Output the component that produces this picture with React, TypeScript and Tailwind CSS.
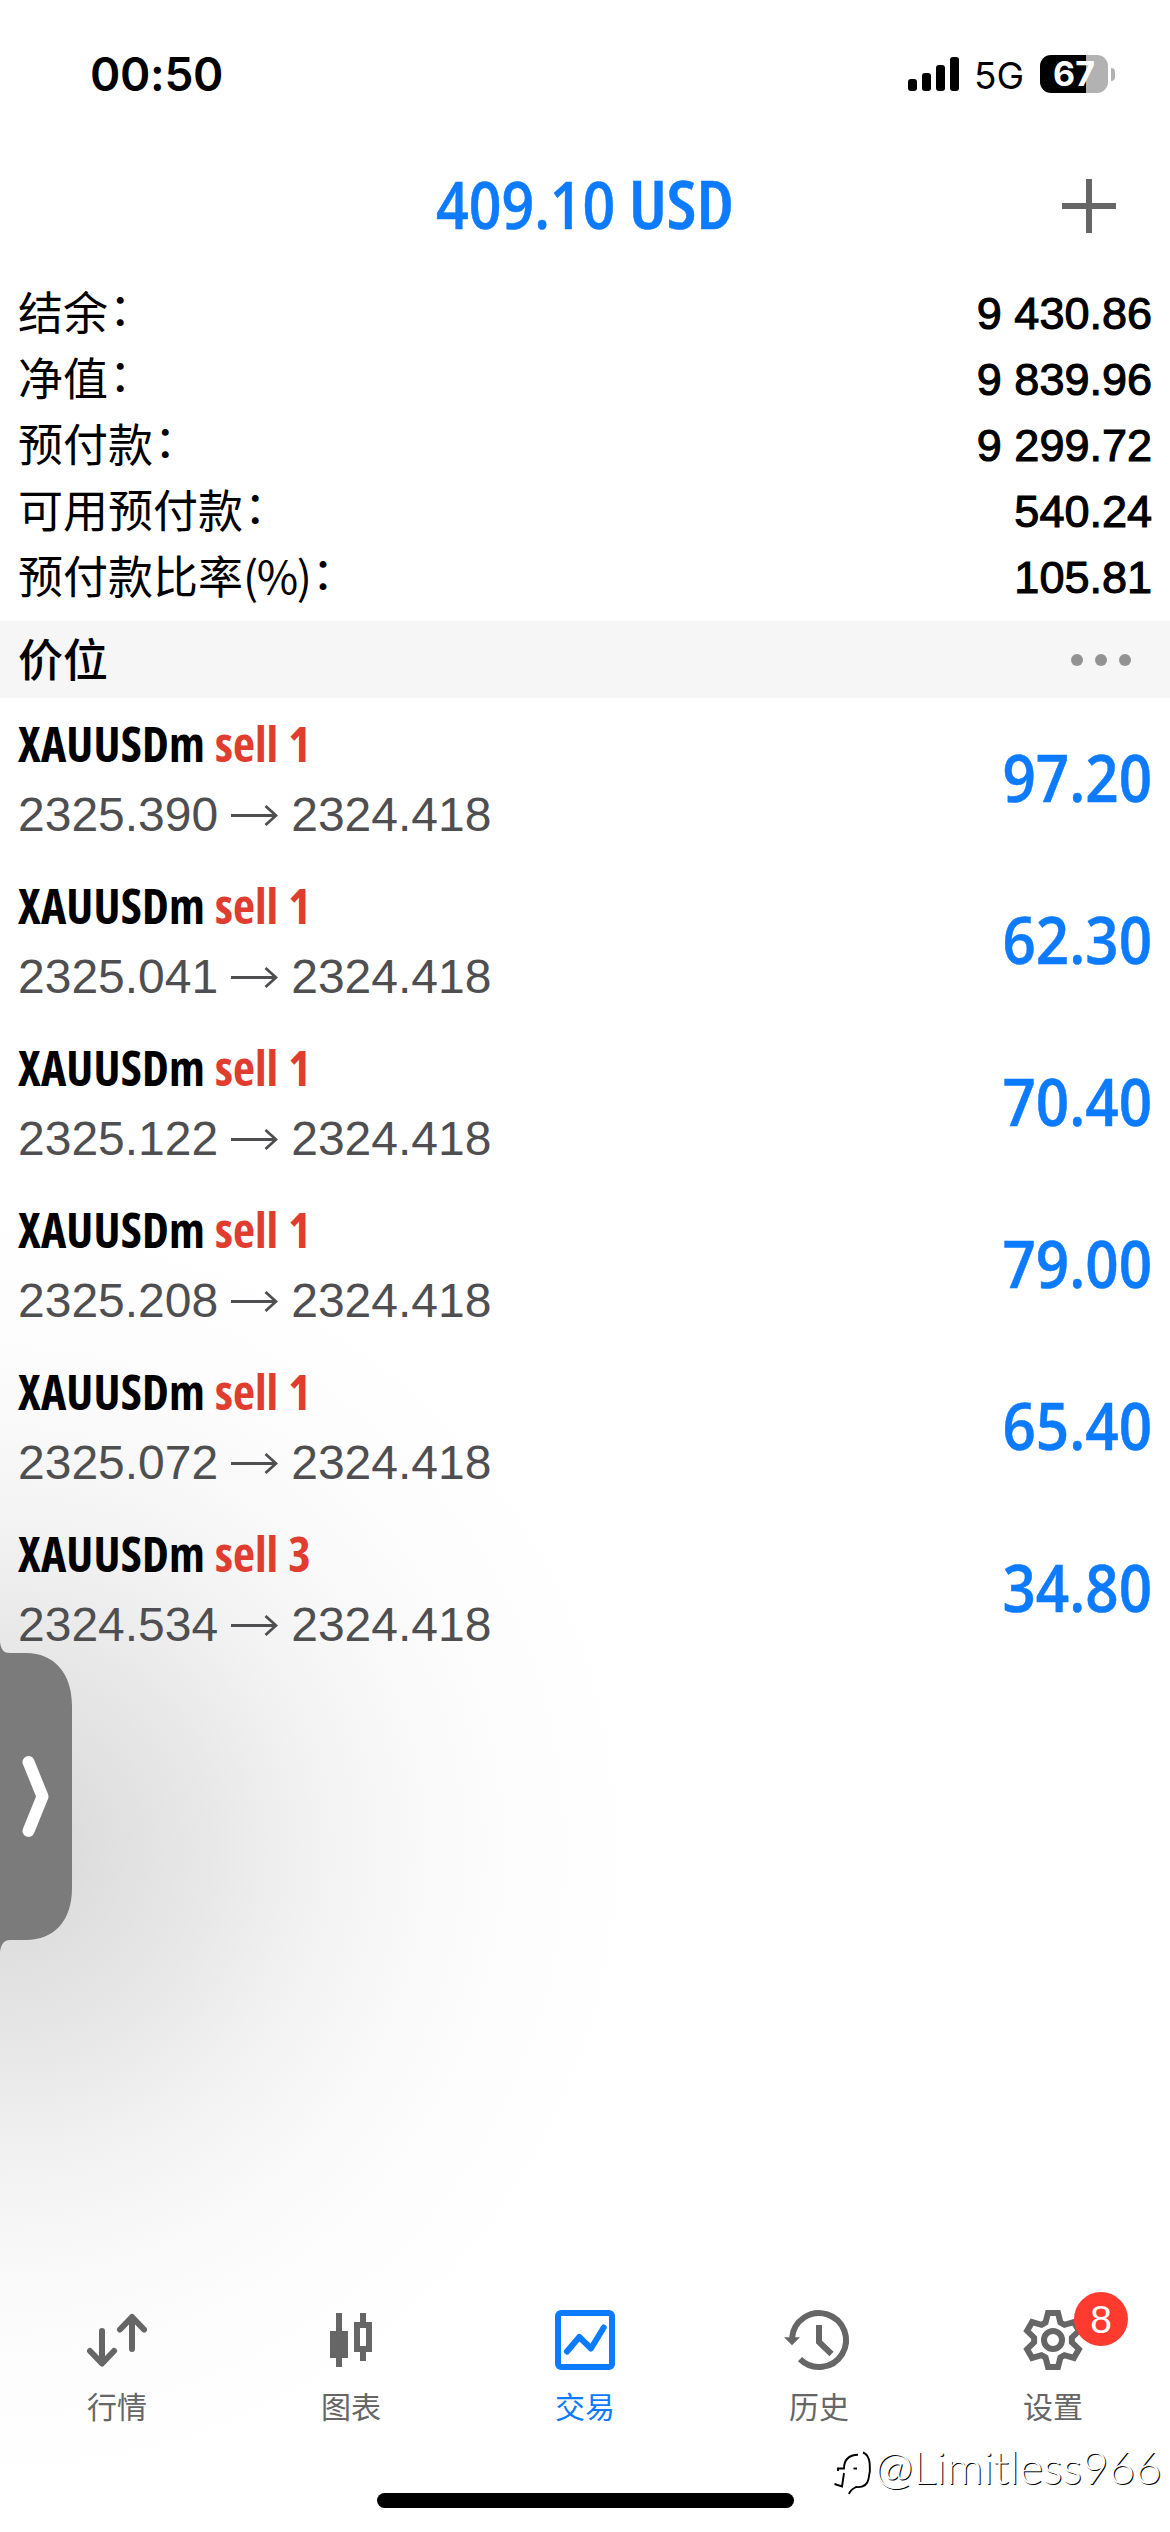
const SUMMARY = [
  { label: "结余", unit: "", value: "9 430.86" },
  { label: "净值", unit: "", value: "9 839.96" },
  { label: "预付款", unit: "", value: "9 299.72" },
  { label: "可用预付款", unit: "", value: "540.24" },
  { label: "预付款比率", unit: "(%)", value: "105.81" },
];

const POSITIONS = [
  { side: "sell", volume: "1", open: "2325.390", profit: "97.20" },
  { side: "sell", volume: "1", open: "2325.041", profit: "62.30" },
  { side: "sell", volume: "1", open: "2325.122", profit: "70.40" },
  { side: "sell", volume: "1", open: "2325.208", profit: "79.00" },
  { side: "sell", volume: "1", open: "2325.072", profit: "65.40" },
  { side: "sell", volume: "3", open: "2324.534", profit: "34.80" },
];

function StatusBar() {
  return (
    <header className="flex h-[148px] items-center justify-between pl-[90px] pr-[55px] font-['Inter',sans-serif] text-black">
      <span className="text-[46px] leading-none font-semibold tracking-[-0.3px]">00:50</span>
      <div className="flex items-center">
        <div className="flex h-[34px] items-end gap-[5px]">
          <i className="h-3 w-[9px] rounded-[3px] bg-black" />
          <i className="h-[18px] w-[9px] rounded-[3px] bg-black" />
          <i className="h-[26px] w-[9px] rounded-[3px] bg-black" />
          <i className="h-[34px] w-[9px] rounded-[3px] bg-black" />
        </div>
        <span className="mt-[3px] ml-[15px] text-[37px] leading-none">5G</span>
        <div className="ml-[16px] flex h-[38px] w-[68px] items-center justify-center rounded-[11px] bg-linear-to-r from-black from-[67.5%] to-[#b2b2b2] to-[67.5%]">
          <span className="text-[34px] leading-none font-bold text-white">67</span>
        </div>
        <i className="ml-[3px] h-[13px] w-1 rounded-r-full bg-[#b2b2b2]" />
      </div>
    </header>
  );
}

function TitleBar() {
  return (
    <div className="grid h-[116px] grid-cols-[1fr_auto_1fr] items-center">
      <span />
      <h1 className="flex pb-[7px] font-['Open_Sans',sans-serif] text-[66px] leading-none font-semibold whitespace-nowrap text-[#0d7bff] [-webkit-text-stroke:0.5px_#0d7bff]">
        <span className="w-[193px] origin-left scale-x-[0.867]">409.10</span>
        <span className="w-[105px] origin-left scale-x-[1.06] [font-stretch:75%]">USD</span>
      </h1>
      <svg className="mr-[54px] size-[54px] justify-self-end" viewBox="0 0 54 54" fill="none" stroke="#666" strokeWidth="6">
        <path d="M27 0v54M0 27h54" />
      </svg>
    </div>
  );
}

function Summary() {
  return (
    <dl className="mt-[15px] mb-3 flex flex-col px-[18px] text-[45px] leading-none text-black">
      {SUMMARY.map((row) => (
        <div key={row.label} className="flex h-[66px] items-center justify-between">
          <dt className="pb-1 font-['Noto_Sans_CJK_SC',sans-serif]">
            {row.label}
            {row.unit && <span className="tracking-[-1.4px]">{row.unit}</span>}
            <span className="relative -top-[4px] left-px">：</span>
          </dt>
          <dd className="pt-[3px] font-['Liberation_Sans',sans-serif] [-webkit-text-stroke:1.1px_black]">{row.value}</dd>
        </div>
      ))}
    </dl>
  );
}

function SectionHeader() {
  return (
    <div className="flex h-[77px] items-center justify-between bg-[#f6f6f6] pr-[39px] pl-[18px]">
      <h2 className="pb-1 font-['Noto_Sans_CJK_SC',sans-serif] text-[45px] leading-none font-medium text-black">价位</h2>
      <div className="flex gap-3">
        <i className="size-3 rounded-full bg-[#939393]" />
        <i className="size-3 rounded-full bg-[#939393]" />
        <i className="size-3 rounded-full bg-[#939393]" />
      </div>
    </div>
  );
}

function PositionRow({ side, volume, open, profit }: (typeof POSITIONS)[number]) {
  return (
    <li className="flex h-[162px] items-start justify-between pr-[18px] pl-[18px]">
      <div className="pt-[16px]">
        <p className="flex font-['Open_Sans',sans-serif] text-[48px] leading-[60px] font-bold text-black [font-stretch:75%]">
          <span className="tracking-[0.2px]">XAUUSDm</span>
          <span className="ml-[10px] text-[#e03c2f]">{side}</span>
          <span className="ml-[10px] text-[#e03c2f]">{volume}</span>
        </p>
        <p className="mt-[11px] flex items-center font-['Liberation_Sans',sans-serif] text-[48px] leading-[60px] text-[#4f4f51]">
          <span>{open}</span>
          <svg className="mx-[13px] h-[21px] w-[47px]" viewBox="0 0 47 21" fill="none" stroke="#4f4f51" strokeWidth="2.8">
            <path d="M0 10.5h45M34.500 1l10.500 9.500-10.500 9.500" />
          </svg>
          <span>2324.418</span>
        </p>
      </div>
      <span className="origin-right scale-x-[0.885] self-center pb-[7px] font-['Open_Sans',sans-serif] text-[66px] leading-none font-semibold text-[#0d7bff] [-webkit-text-stroke:0.5px_#0d7bff]">{profit}</span>
    </li>
  );
}

const QuotesIcon = () => (
  <svg className="size-[60px]" viewBox="0 0 60 60" fill="none" stroke="currentColor" strokeWidth="6" strokeLinecap="round" strokeLinejoin="round">
    <path d="M15 21v32M3 41l12 12.500L27 41M45 39V7M33 19.500L45 7l12 12.500" />
  </svg>
);

const ChartIcon = () => (
  <svg className="size-[60px]" viewBox="0 0 60 60" fill="currentColor">
    <path d="M15 3h6v18h6v27h-6v9h-6v-9H9V21h6z" />
    <path fillRule="evenodd" d="M39 3h6v9h6v30h-6v9h-6v-9h-6V12h6zM39 18v18h6V18z" />
  </svg>
);

const TradeIcon = () => (
  <svg className="size-[60px]" viewBox="0 0 60 60" fill="none" stroke="currentColor" strokeWidth="6" strokeLinecap="round" strokeLinejoin="round">
    <rect x="3" y="3" width="54" height="54" rx="3" />
    <path d="M12 41.500l12.300-14.500L36 38.500l12.700-21" />
  </svg>
);

const HistoryIcon = () => (
  <svg className="size-[60px] overflow-visible" viewBox="0 0 60 60" fill="none" stroke="currentColor" strokeWidth="6">
    <path d="M3.100 28A27 27 0 1 1 11 49.200" />
    <path d="M30 15v17l12.500 12" />
    <path d="M-5 27.300h16L3 35.300z" fill="currentColor" stroke="none" />
  </svg>
);

const gearPoints = Array.from({ length: 6 }, (_, i) =>
  [
    [-23, 19],
    [-10.5, 27.5],
    [10.5, 27.5],
    [23, 19],
  ].map(([angle, radius]) => {
    const a = ((i * 60 + angle) * Math.PI) / 180;
    return `${(30 + radius * Math.sin(a)).toFixed(2)},${(30 - radius * Math.cos(a)).toFixed(2)}`;
  }),
)
  .flat()
  .join(" ");

const SettingsIcon = () => (
  <svg className="size-[60px]" viewBox="0 0 60 60" fill="none" stroke="currentColor" strokeWidth="6">
    <polygon points={gearPoints} />
    <circle cx="30" cy="30" r="9" />
  </svg>
);

const TABS = [
  { label: "行情", Icon: QuotesIcon },
  { label: "图表", Icon: ChartIcon },
  { label: "交易", Icon: TradeIcon, active: true },
  { label: "历史", Icon: HistoryIcon },
  { label: "设置", Icon: SettingsIcon, badge: "8" },
];

function TabBar() {
  return (
    <nav className="grid h-[183px] grid-cols-5">
      {TABS.map(({ label, Icon, active, badge }) => (
        <div key={label} className={active ? "flex flex-col items-center gap-[15px] text-[#0d7bff]" : "flex flex-col items-center gap-[15px] text-[#666]"}>
          <div className="relative">
            <Icon />
            {badge && (
              <span className="absolute -top-[18px] left-[51px] flex size-[54px] items-center justify-center rounded-full bg-[#ff3b30] font-['Liberation_Sans',sans-serif] text-[39px] leading-none text-white">{badge}</span>
            )}
          </div>
          <span className="font-['Noto_Sans_CJK_SC',sans-serif] text-[30px] leading-[40px]">{label}</span>
        </div>
      ))}
    </nav>
  );
}

function SideHandle() {
  return (
    <svg className="absolute top-[1642px] left-0 h-[310px] w-[74px]" viewBox="0 0 74 310" fill="none">
      <path d="M0 0C1 8 4 11 10 11H26C54 11 72 31 72 64V246C72 279 54 298 26 298H10C4 298 1 302 0 310Z" fill="#7b7b7b" />
      <path d="M28.500 120L42.500 154.500L28.500 189" stroke="#fff" strokeWidth="12" strokeLinecap="round" strokeLinejoin="round" />
    </svg>
  );
}

function Watermark() {
  return (
    <div className="absolute top-[2429px] left-[830px] flex items-start">
      <svg className="h-[70px] w-[45px]" viewBox="0 0 45 70" fill="none" stroke="#000" strokeWidth="1.900">
        <path d="M8 42v-2.500h6C14 31 18 26 28 25.700M14 44L12 57.500L4.500 55M33 23.500C41 26 41 41 38.500 50C37 57 31 58.500 26 58C22 60 20 61.500 19 65" />
        <path d="M23.500 39.500h3.500" />
      </svg>
      <span className="pt-[10px] font-['Lato',sans-serif] text-[45.800px] leading-[55px] font-light text-white [text-shadow:1px_1px_0px_#000]">@Limitless966</span>
    </div>
  );
}

export default function App() {
  return (
    <div className="relative flex h-[2532px] w-[1170px] flex-col overflow-hidden bg-white bg-[radial-gradient(circle_660px_at_0px_1850px,#d6d6d6_0%,#dfdfdf_15%,#e8e8e8_32%,#f2f2f2_48%,#f9f9f9_64%,#fdfdfd_80%,#ffffff_100%)]">
      <StatusBar />
      <TitleBar />
      <Summary />
      <SectionHeader />
      <ul className="flex-1">
        {POSITIONS.map((position) => (
          <PositionRow key={position.open} {...position} />
        ))}
      </ul>
      <TabBar />
      <div className="flex h-[39px] justify-center">
        <i className="h-[15px] w-[417px] rounded-full bg-black" />
      </div>
      <SideHandle />
      <Watermark />
    </div>
  );
}
